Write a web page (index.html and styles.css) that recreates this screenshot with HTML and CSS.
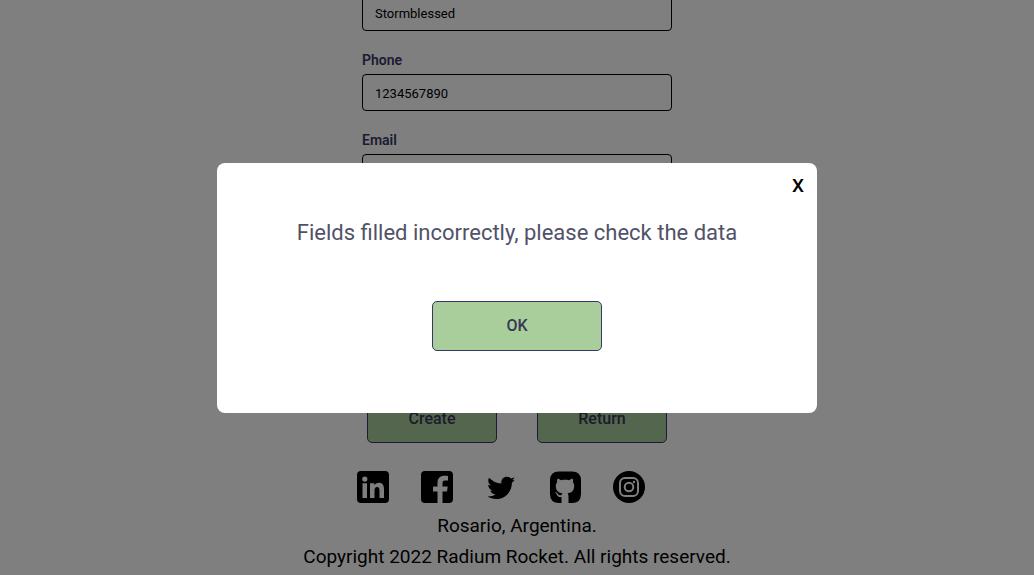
FILE: index.html
```html
<!DOCTYPE html>
<html lang="en">
<head>
<meta charset="utf-8">
<meta name="viewport" content="width=device-width, initial-scale=1">
<title>Radium Rocket</title>
<link rel="stylesheet" href="styles.css">
</head>
<body>
<div class="page">
  <main class="main">
    <form class="form">
      <div class="field">
        <input class="input" type="text" value="Stormblessed" aria-label="Stormblessed">
      </div>
      <div class="field">
        <label class="label" for="phone">Phone</label>
        <input class="input" id="phone" type="text" value="1234567890">
      </div>
      <div class="field">
        <label class="label" for="email">Email</label>
        <input class="input" id="email" type="text">
      </div>
      <div class="actions">
        <button class="button" type="button">Create</button>
        <button class="button" type="button">Return</button>
      </div>
    </form>
  </main>
  <footer class="footer">
    <nav class="social">
      <a href="#" aria-label="LinkedIn"><svg class="icon" viewBox="0 0 32 32"><path fill-rule="evenodd" d="M4 0H28Q32 0 32 4V28Q32 32 28 32H4Q0 32 0 28V4Q0 0 4 0ZM5.500 12.200V27H10V12.200ZM7.800 5.500A2.600 2.600 0 1 0 7.800 10.700A2.600 2.600 0 1 0 7.800 5.500ZM13 12.200V27H17.500V19.500C17.500 17.200 18.300 15.900 20.100 15.900C22 15.900 22.500 17.400 22.500 19.600V27H27V18.500C27 14.500 25.600 11.800 21.800 11.800C19.700 11.800 18.200 12.800 17.500 14.200H17.400V12.200Z"/></svg></a>
      <a href="#" aria-label="Facebook"><svg class="icon" viewBox="0 0 32 32"><path d="M4 0H28Q32 0 32 4V28Q32 32 28 32H21.500V20.500H26L26.700 15.500H21.500V12C21.500 10.300 22.300 9.500 24.200 9.500H27V5C26 4.800 24.800 4.700 23.500 4.700C19.300 4.700 16.500 7 16.500 11.400V15.500H12V20.500H16.500V32H4Q0 32 0 28V4Q0 0 4 0Z"/></svg></a>
      <a href="#" aria-label="Twitter"><svg class="icon" viewBox="0 0 32 32"><path d="M29.600 8.800L27.300 9.200C28.200 8.500 29 7.600 29.300 6.300C28.300 6.900 27.200 7.200 25.900 7.400C24.900 6.300 23.500 5.700 21.900 5.700C18.300 5.700 15.900 8.700 16.300 12.500C11.700 12.300 7.400 10.200 4 6.700C2.600 9.300 3.200 12.600 5.800 14.400C4.900 14.400 4 14.100 3.200 13.700C3.200 16.500 5.100 18.800 7.700 19.400C6.900 19.600 6.100 19.600 5.300 19.500C6 21.700 8 23.300 10.500 23.300C8.300 25 5.400 25.800 2.400 25.500C4.900 27.100 7.900 28 11 28C21.200 28 27 19.700 26.900 11.800C28 11 28.900 10 29.600 8.800Z"/></svg></a>
      <a href="#" aria-label="GitHub"><svg class="icon" viewBox="0 0 32 32"><path d="M10 .5H23Q32 .5 32 9.500V23Q32 32 23 32H19.500V25.500C19.500 24 19.100 22.900 18.500 22.200C22 21.800 25.200 20.300 25.200 15C25.200 13.500 24.800 12.300 23.900 11.300C24.300 10.200 24.200 9 23.700 7.700C22.500 7.700 21 8.400 20 9.200C17.700 8.600 14.600 8.600 12.200 9.200C11 8.400 9.500 7.700 8.400 7.700C7.900 9 7.900 10.200 8.200 11.300C7.300 12.300 6.800 13.500 6.800 15C6.800 20.300 10 21.800 13.500 22.200C13 22.700 12.700 23.300 12.600 24.100C10.900 24.700 9.500 24.200 8.600 22.600C7.900 21.500 7 21 5.700 21.200C7.400 22 7.600 23.300 8.300 24.500C9.200 25.900 10.700 26.400 12.500 26V32H10Q1 32 1 23V9.500Q1 .5 10 .5Z"/></svg></a>
      <a href="#" aria-label="Instagram"><svg class="icon" viewBox="0 0 32 32"><circle cx="16" cy="16" r="16"/><g class="icon-cut"><rect x="7" y="7" width="18" height="18" rx="5"/><circle cx="16" cy="16" r="4.300"/></g><circle class="icon-dot" cx="21" cy="11" r="1.200"/></svg></a>
    </nav>
    <p class="footer-text">Rosario, Argentina.</p>
    <p class="footer-text">Copyright 2022 Radium Rocket. All rights reserved.</p>
  </footer>
</div>
<div class="overlay">
  <div class="modal" role="dialog" aria-modal="true" aria-labelledby="message">
    <button class="close" type="button">X</button>
    <p class="message" id="message">Fields filled incorrectly, please check the data</p>
    <button class="button button-wide" type="button">OK</button>
  </div>
</div>
</body>
</html>
```
FILE: styles.css
```css
* { box-sizing: border-box; }
body, p { margin: 0; }
body { background: #fff; color: #000; font-family: Roboto, sans-serif; }
button, input { font-family: inherit; }
.page {
  height: 100vh;
  overflow: hidden;
  display: flex;
  flex-direction: column;
  justify-content: flex-end;
}
.main { display: flex; justify-content: center; }
.form { width: 310px; max-width: 100%; }
.field { display: flex; flex-direction: column; margin-bottom: 20px; }
.label {
  color: #373867;
  font-size: 14px;
  font-weight: 600;
  line-height: 19px;
  margin-bottom: 4px;
}
.input {
  width: 100%;
  height: 37px;
  padding: 2px 12px 0;
  border: 1px solid #000;
  border-radius: 4px;
  background: transparent;
  color: #000;
  font-size: 13px;
}
.actions { display: flex; justify-content: center; gap: 40px; padding-top: 182px; }
.button {
  flex-shrink: 0;
  width: 130px;
  height: 50px;
  padding: 0;
  border: 1px solid #373867;
  border-radius: 5px;
  background: #a9cd9b;
  color: #373856;
  font-size: 16px;
  font-weight: 500;
}
.button-wide { width: 170px; }
.footer {
  display: flex;
  flex-direction: column;
  align-items: center;
  padding: 28px 0 3px;
}
.social { display: flex; gap: 32px; padding-right: 32px; margin-bottom: 7px; }
.icon { display: block; width: 32px; height: 32px; }
.icon-cut { fill: none; stroke: #fff; stroke-width: 2; }
.icon-dot { fill: #fff; }
.footer-text { font-size: 19px; line-height: 31px; text-align: center; }
.overlay {
  position: fixed;
  inset: 0;
  display: flex;
  align-items: center;
  justify-content: center;
  background: rgba(0, 0, 0, .5);
}
.modal {
  width: 600px;
  max-width: 100%;
  min-height: 250px;
  display: flex;
  flex-direction: column;
  align-items: center;
  border-radius: 8px;
  background: #fff;
}
.close {
  align-self: flex-end;
  margin: 12px 13px 0 0;
  padding: 0;
  border: 0;
  background: none;
  color: #000;
  font-size: 19px;
  font-weight: 500;
  line-height: 22px;
}
.message {
  margin: 21px 0 53px;
  color: #515268;
  font-size: 22px;
  line-height: 30px;
  text-align: center;
}
```
